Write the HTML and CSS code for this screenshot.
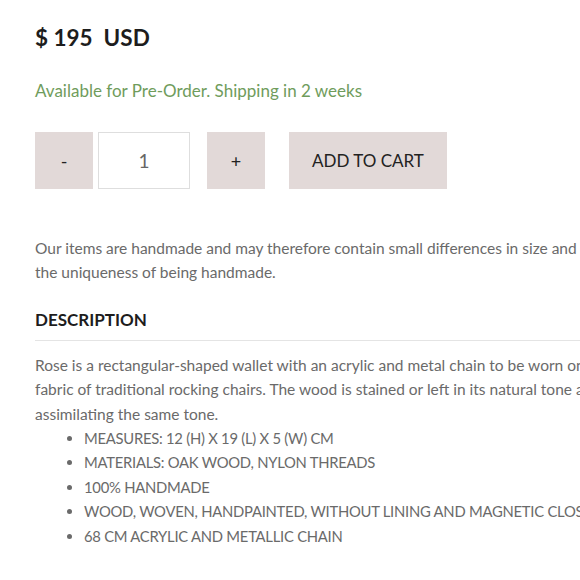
FILE: index.html
```html
<!DOCTYPE html>
<html>
<head>
<meta charset="utf-8">
<link rel="stylesheet" href="styles.css">
</head>
<body>
<div class="page">
  <div class="price">$ 195&nbsp; USD</div>
  <div class="avail">Available for Pre-Order. Shipping in 2 weeks</div>
  <div class="buy">
    <div class="qty">
      <button class="step">-</button>
      <div class="num">1</div>
      <button class="step plus">+</button>
    </div>
    <button class="cart">ADD TO CART</button>
  </div>
  <p class="note">Our items are handmade and may therefore contain small differences in size and color, which adds to<br>the uniqueness of being handmade.</p>
  <h3 class="head">DESCRIPTION</h3>
  <p class="desc">Rose is a rectangular-shaped wallet with an acrylic and metal chain to be worn on the shoulder, inspired by the<br>fabric of traditional rocking chairs. The wood is stained or left in its natural tone and the weave is made<br>assimilating the same tone.</p>
  <ul class="specs">
    <li>MEASURES: 12 (H) X 19 (L) X 5 (W) CM</li>
    <li>MATERIALS: OAK WOOD, NYLON THREADS</li>
    <li>100% HANDMADE</li>
    <li>WOOD, WOVEN, HANDPAINTED, WITHOUT LINING AND MAGNETIC CLOSURE</li>
    <li>68 CM ACRYLIC AND METALLIC CHAIN</li>
  </ul>
</div>
</body>
</html>
```
FILE: styles.css
```css
html, body {
  margin: 0;
  padding: 0;
  background: #fff;
  overflow: hidden;
}
body {
  width: 580px;
  height: 580px;
  font-family: Lato, "Liberation Sans", sans-serif;
}
.page {
  width: 900px;
  padding: 23px 0 0 35px;
  box-sizing: border-box;
}
.price {
  font-size: 22.5px;
  font-weight: 700;
  color: #1d1d1d;
  line-height: 30px;
}
.avail {
  margin-top: 26px;
  font-size: 17px;
  color: #6f9c5c;
  line-height: 24px;
}
.buy {
  display: flex;
  gap: 24px;
  margin-top: 29px;
}
.qty {
  display: flex;
  gap: 5px;
}
.step, .cart {
  border: none;
  background: #e2d9d8;
  font-family: inherit;
  color: #222;
  height: 57px;
  padding: 0;
}
.step {
  width: 58px;
  font-size: 18px;
}
.plus { margin-left: 12px; }
.num {
  width: 90px;
  height: 55px;
  border: 1px solid #dedede;
  display: flex;
  align-items: center;
  justify-content: center;
  font-size: 19px;
  color: #666;
}
.cart {
  width: 158px;
  font-size: 17px;
}
.note, .desc, .specs {
  white-space: nowrap;
  font-size: 15.5px;
  color: #6a6a6a;
}
.note {
  margin: 47px 0 0;
  line-height: 24px;
}
.head {
  margin: 24px 0 0;
  width: 545px;
  font-size: 17px;
  font-weight: 700;
  color: #1d1d1d;
  padding-bottom: 8px;
  border-bottom: 1px solid #e4e4e4;
  line-height: 24px;
}
.desc {
  margin: 12px 0 0;
  line-height: 24.3px;
}
.specs {
  margin: 0;
  padding-left: 49px;
  line-height: 24.5px;
  font-size: 14.8px;
  letter-spacing: -0.25px;
}
```
